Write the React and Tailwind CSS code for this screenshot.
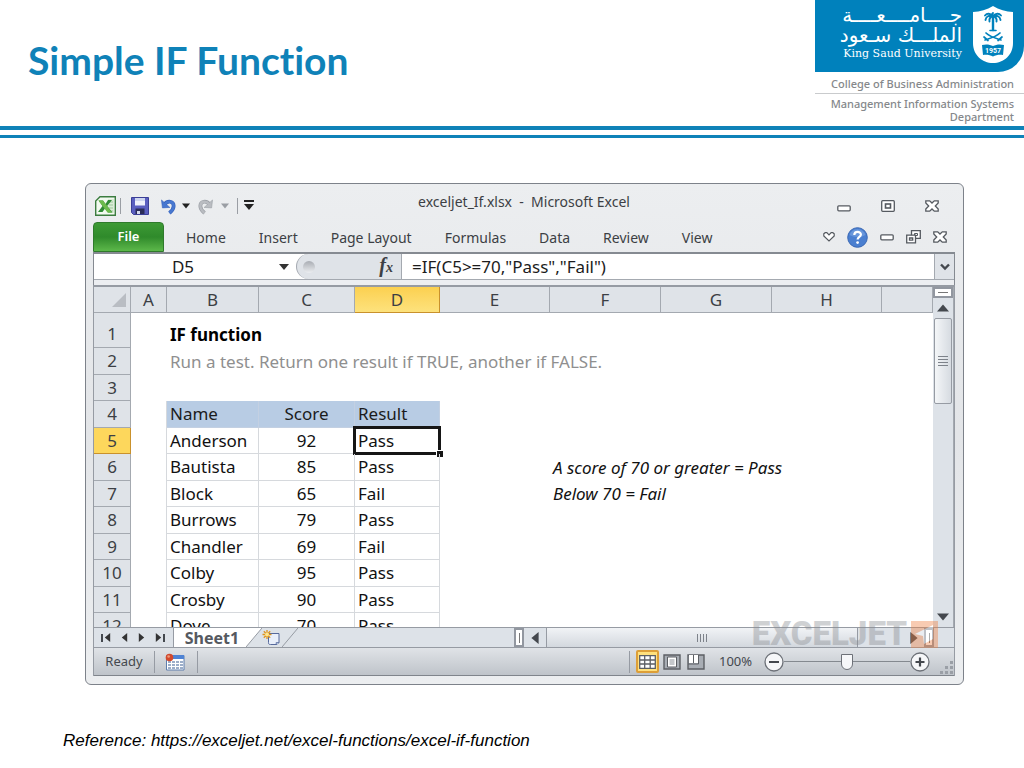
import React, { useState } from 'react';

const tabs = ['Home', 'Insert', 'Page Layout', 'Formulas', 'Data', 'Review', 'View'];

const columns = [
  { id: 'A', width: 'w-9' },
  { id: 'B', width: 'w-[92px]' },
  { id: 'C', width: 'w-24' },
  { id: 'D', width: 'w-[85px]' },
  { id: 'E', width: 'w-[110px]' },
  { id: 'F', width: 'w-[111px]' },
  { id: 'G', width: 'w-[111px]' },
  { id: 'H', width: 'w-[110px]' },
  { id: '', width: '' },
];

const rows = [
  { B: 'IF function' },
  { B: 'Run a test. Return one result if TRUE, another if FALSE.' },
  {},
  { B: 'Name', C: 'Score', D: 'Result' },
  { B: 'Anderson', C: '92', D: 'Pass' },
  { B: 'Bautista', C: '85', D: 'Pass', F: 'A score of 70 or greater = Pass' },
  { B: 'Block', C: '65', D: 'Fail', F: 'Below 70 = Fail' },
  { B: 'Burrows', C: '79', D: 'Pass' },
  { B: 'Chandler', C: '69', D: 'Fail' },
  { B: 'Colby', C: '95', D: 'Pass' },
  { B: 'Crosby', C: '90', D: 'Pass' },
  { B: 'Dove', C: '70', D: 'Pass' },
];

function getCellClass(row, col) {
  const inTable = row >= 4 && ['B', 'C', 'D'].includes(col);
  if (row === 1) return 'font-bold text-black';
  if (row === 2) return 'text-[#8f8f8f]';
  if (row === 4 && inTable) return 'bg-[#b8cce4] border-r border-b border-[#c3d0e2] text-[#1c1c1c]';
  if (inTable) return 'border-r border-b border-[#d6d9dd] text-[#111]';
  if (col === 'A' && row >= 4) return 'border-r border-[#d6d9dd]';
  return 'italic text-[#111]';
}

/* ---------- icons ---------- */

function Triangle({ dir = 'down', size = 10, className = 'text-[#333]' }) {
  const points = {
    down: '0,2 10,2 5,8',
    up: '0,8 10,8 5,2',
    left: '8,0 8,10 2,5',
    right: '2,0 2,10 8,5',
  };
  return (
    <svg width={size} height={size} viewBox="0 0 10 10" className={className} fill="currentColor">
      <polygon points={points[dir]} />
    </svg>
  );
}

function ExcelIcon() {
  return (
    <svg width="21" height="20" viewBox="0 0 21 20">
      <path d="M5 .7h15.3v18.6H.7V5z" fill="#f2faf0" stroke="#3c7d40" strokeWidth="1.4" />
      <path d="M13 3h6v14h-6z" fill="#dcecd8" />
      <path d="M14 6h4M14 9h4M14 12h4M14 15h4" stroke="#9cc79a" />
      <path d="M3.500 4.500h4.500l2.500 3.500 2.500-4h4l-4.800 6 5.300 6.500h-4.500L10 12.500 7.500 16H3l4.500-6z" fill="#2f8a35" />
      <path d="M3.500 4.500h4.500l9 12h-4.500z" fill="#6dbb4c" />
    </svg>
  );
}

function SaveIcon() {
  return (
    <svg width="18" height="18" viewBox="0 0 18 18">
      <path d="M.5.500h17v17h-15l-2-2z" fill="#5a5fc0" stroke="#3b3f96" />
      <path d="M4 1h10v7.500H4z" fill="#eef1fb" />
      <path d="M4 1h10v3H4z" fill="#cdd5f0" />
      <path d="M4.500 11.500h9V17h-9z" fill="#2a2d58" />
      <path d="M6 14h3v3H6z" fill="#d5daee" />
    </svg>
  );
}

function UndoIcon({ flipped, color = '#4878d0', edge = '#3561bb' }) {
  return (
    <svg width="15" height="17" viewBox="0 0 16 18" className={flipped ? '-scale-x-100' : ''}>
      <path d="M4 6.500C7 2.500 13.500 3 13.500 8.500c0 3.500-2 5.500-4.500 7.500" fill="none" stroke={edge} strokeWidth="4" />
      <path d="M.5 2l1 8.500 8-.5z" fill={color} stroke={edge} strokeWidth=".6" />
      <path d="M4 6.500C7 2.500 13.500 3 13.500 8.500c0 3.500-2 5.500-4.500 7.500" fill="none" stroke={color} strokeWidth="2.600" />
    </svg>
  );
}

function MinimizeIcon() {
  return (
    <svg width="14" height="7" viewBox="0 0 14 7">
      <rect x=".8" y=".8" width="12.400" height="5" rx="1" fill="#fff" stroke="#555a60" strokeWidth="1.300" />
    </svg>
  );
}

function MaximizeIcon() {
  return (
    <svg width="14" height="12" viewBox="0 0 14 12">
      <rect x=".7" y=".7" width="12.600" height="10.600" rx="1" fill="#fff" stroke="#555a60" strokeWidth="1.300" />
      <rect x="4.500" y="4" width="5" height="4" fill="#fff" stroke="#555a60" strokeWidth="1.600" />
    </svg>
  );
}

function RestoreIcon() {
  return (
    <svg width="15" height="14" viewBox="0 0 15 14">
      <path d="M5.500.700h8.800v7.600H5.500z" fill="#fff" stroke="#555a60" strokeWidth="1.300" />
      <path d="M8.500 3.500h3v2h-3z" fill="none" stroke="#555a60" />
      <path d="M.7 5.200h8.800v7.600H.7z" fill="#fff" stroke="#555a60" strokeWidth="1.300" />
      <path d="M3.500 8h3.200v2.200H3.500z" fill="none" stroke="#555a60" strokeWidth="1.300" />
    </svg>
  );
}

function CloseIcon() {
  return (
    <svg width="14" height="12" viewBox="0 0 14 12">
      <path
        d="M.8.800h3.900L7 3 9.300.800h3.900v2.200L10.300 6l2.900 3v2.200H9.300L7 9l-2.300 2.200H.8V9l2.900-3L.8 3z"
        fill="#fff"
        stroke="#555a60"
        strokeWidth="1.300"
      />
    </svg>
  );
}

function RibbonToggleIcon() {
  return (
    <svg width="12" height="10" viewBox="0 0 12 10">
      <path d="M.8 1.800L2.200.700h1.600L6 3 8.200.700h1.600l1.400 1.100V4L6 9 .8 4z" fill="#fff" stroke="#555a60" strokeWidth="1.200" />
    </svg>
  );
}

function HelpIcon() {
  return (
    <svg width="21" height="21" viewBox="0 0 21 21">
      <circle cx="10.500" cy="10.500" r="9.800" fill="#4a7fd0" stroke="#3a68b4" />
      <path d="M2.500 8a8.500 8.500 0 0116 0c-4 2.500-12 2.500-16 0z" fill="#7ea6e2" opacity=".6" />
      <path d="M7.300 8c0-4 6.600-4 6.600-.4 0 2.400-3.300 2.300-3.300 5" fill="none" stroke="#fff" strokeWidth="2.200" />
      <circle cx="10.600" cy="15.600" r="1.400" fill="#fff" />
    </svg>
  );
}

function MacroIcon() {
  return (
    <svg width="20" height="18" viewBox="0 0 20 18">
      <path d="M1.500 2.500h17.500v14.500H1.500z" fill="#fff" stroke="#5f7fae" />
      <path d="M2 2h17v4H2z" fill="#4f83d4" />
      <path d="M3 9h15M3 12h15M3 15h15" stroke="#7c94b8" strokeWidth="1.400" />
      <path d="M6.500 7v9M10.500 7v9M14.500 7v9" stroke="#fff" />
      <circle cx="4.500" cy="4.500" r="3.800" fill="#d3492c" />
      <circle cx="3.600" cy="3.500" r="1.300" fill="#ee9a7c" />
    </svg>
  );
}

function NewSheetIcon() {
  return (
    <svg width="20" height="16" viewBox="0 0 20 16">
      <path d="M6.500 3.500h10.500v9l-2 2H8.500c-2 0-2-1-2-2z" fill="#e9effa" stroke="#56699c" />
      <path d="M17 12.500l-3 .2.500 2.300" fill="#b8c6e4" stroke="#56699c" strokeWidth=".8" />
      <path d="M5 0v9M.5 4.500h9M1.800 1.300l6.400 6.400M8.200 1.300L1.800 7.700" stroke="#dd9420" strokeWidth="1.300" />
      <circle cx="5" cy="4.500" r="2" fill="#ffe58a" />
    </svg>
  );
}

function Shield() {
  return (
    <svg width="42" height="59" viewBox="0 0 42 59">
      <path d="M21 0c6 4 13 5.500 20 6v31c0 12-9 20-20 20S1 49 1 37V6c7-.5 14-2 20-6z" fill="#fff" />
      <g fill="none" stroke="#0081bc" strokeLinecap="round">
        <path d="M21 11v13" strokeWidth="2.400" />
        <path d="M21 10c-3-3-6-3-8-.5M21 10c3-3 6-3 8-.5M21 10c-5-1-7 1-7.500 4M21 10c5-1 7 1 7.500 4M21 10c-3 1-4 3-3.500 5.500M21 10c3 1 4 3 3.500 5.500M21 10c-1-1-1-2 0-3" strokeWidth="1.900" />
        <path d="M18 24.500h6" strokeWidth="1.600" />
        <path d="M13 34c3-1 11-3 15-7M29 34c-3-1-11-3-15-7M12 31l4 3.500M30 31l-4 3.500" strokeWidth="1.700" />
      </g>
      <path d="M10 39c4-1 8-.5 11 1 3-1.500 7-2 11-1l-1 10c-4-.5-7 0-10 1.500-3-1.500-6-2-10-1.500z" fill="#0081bc" />
      <text x="21" y="47" textAnchor="middle" fontSize="7" fontWeight="bold" fontFamily="Roboto, sans-serif" fill="#fff">1957</text>
    </svg>
  );
}

/* ---------- page header ---------- */

function SlideHeader() {
  return (
    <header>
      <div className="flex justify-between h-[126px]">
        <h1 className="pl-7 pt-9 text-[39px] leading-[48px] font-bold text-[#0f82b8] font-['Lato',sans-serif] [font-variant-ligatures:none]">
          Simple IF Function
        </h1>
        <div className="w-[209px] font-['Noto_Sans',sans-serif] text-[#85888b]">
          <div className="flex justify-end gap-2.5 h-[72px] bg-[#0081bc] rounded-br-[26px] pr-2.5 text-white">
            <div className="pt-1.5 text-right">
              <p dir="rtl" className="h-[18px] text-[20px] leading-[18px] font-['DejaVu_Sans',sans-serif] whitespace-nowrap">جــــامــــعــــة</p>
              <p dir="rtl" className="h-[20px] text-[20px] leading-[22px] font-['DejaVu_Sans',sans-serif] whitespace-nowrap">الملـــك سـعود</p>
              <p className="text-[11px] leading-5 font-['DejaVu_Serif',serif] whitespace-nowrap">King Saud University</p>
            </div>
            <div className="pt-1.5"><Shield /></div>
          </div>
          <p className="pt-1 h-[22px] pr-2.5 text-right text-[11px] leading-4 font-medium whitespace-nowrap border-b border-[#c9cbcd]">
            College of Business Administration
          </p>
          <p className="pt-[3px] pr-2.5 text-right text-[11px] leading-[13px] font-medium">
            Management Information Systems Department
          </p>
        </div>
      </div>
      <div className="h-3 border-t-4 border-b-3 border-[#0f82b8]" />
    </header>
  );
}

/* ---------- workbook window ---------- */

function TitleBar() {
  return (
    <div className="grid grid-cols-[1fr_auto_1fr] h-[38px] text-[#3c3f44]">
      <div className="flex items-center pt-1.5 pl-0.5">
        <ExcelIcon />
        <span className="ml-1 w-px h-4 bg-[#9a9ea4]" />
        <button type="button" aria-label="Save" className="ml-2.5"><SaveIcon /></button>
        <button type="button" aria-label="Undo" className="ml-3"><UndoIcon /></button>
        <Triangle size={8} className="ml-1.5 text-[#222]" />
        <button type="button" aria-label="Redo" className="ml-2"><UndoIcon flipped color="#b9bcc1" edge="#9a9ea4" /></button>
        <Triangle size={8} className="ml-2 text-[#9a9ea4]" />
        <span className="ml-2 w-px h-4 bg-[#9a9ea4]" />
        <button type="button" aria-label="Customize toolbar" className="ml-1.5 flex flex-col items-center">
          <span className="w-2.5 h-0.5 bg-[#222]" />
          <Triangle className="text-[#222]" />
        </button>
      </div>
      <p className="pt-2 text-[14px] leading-5 whitespace-pre">exceljet_If.xlsx  -  Microsoft Excel</p>
      <div className="flex items-center justify-end gap-[30px] pt-1.5 pr-4">
        <button type="button" aria-label="Minimize" className="pt-1"><MinimizeIcon /></button>
        <button type="button" aria-label="Maximize"><MaximizeIcon /></button>
        <button type="button" aria-label="Close"><CloseIcon /></button>
      </div>
    </div>
  );
}

function RibbonTabs() {
  return (
    <nav className="flex items-center h-[30px] text-[14px] text-[#3c3f44]">
      <button type="button" className="w-[71px] h-full rounded-t border border-[#2f7a2c] bg-linear-to-b from-[#3d9a35] via-[#2f8a2b] to-[#5cb84a] text-[13px] font-semibold text-white">
        File
      </button>
      <div className="flex gap-[33px] ml-[22px]">
        {tabs.map((tab) => (
          <button key={tab} type="button" className="whitespace-nowrap">{tab}</button>
        ))}
      </div>
      <div className="flex items-center gap-3 ml-auto pr-2">
        <button type="button" aria-label="Collapse ribbon"><RibbonToggleIcon /></button>
        <button type="button" aria-label="Help"><HelpIcon /></button>
        <button type="button" aria-label="Minimize workbook"><MinimizeIcon /></button>
        <button type="button" aria-label="Restore workbook"><RestoreIcon /></button>
        <button type="button" aria-label="Close workbook"><CloseIcon /></button>
      </div>
    </nav>
  );
}

function FormulaBar() {
  return (
    <div className="flex h-[33px] pb-[5px] border-t-2 border-x border-[#858a91] bg-[#eceef1] text-[17px] text-[#1c1c1c]">
      <div className="flex flex-1 bg-white border-b border-[#a4a9b0]">
        <input aria-label="Name box" defaultValue="D5" className="w-[178px] min-w-0 text-center" />
        <button type="button" aria-label="Open name list" className="w-6 flex items-center justify-center">
          <Triangle />
        </button>
        <div className="flex items-center justify-between w-[106px] pl-1.5 pr-2 rounded-l-full border-l border-r border-[#a4a9b0] bg-[#dfe3e8]">
          <span className="w-3 h-3 rounded-full bg-linear-to-b from-[#a9adb3] to-[#eceef1]" />
          <button type="button" aria-label="Insert function" className="font-['Liberation_Serif',serif] italic font-bold text-[20px] leading-5 text-[#3c3f44]">
            f<span className="text-[14px]">x</span>
          </button>
        </div>
        <input aria-label="Formula" defaultValue={'=IF(C5>=70,"Pass","Fail")'} className="flex-1 min-w-0 pl-2.5" />
        <button type="button" aria-label="Expand formula bar" className="flex items-center justify-center w-5 border-l border-[#a4a9b0] bg-[#dfe3e8]">
          <svg width="10" height="8" viewBox="0 0 10 8"><path d="M1 1.500l4 4 4-4" fill="none" stroke="#44484e" strokeWidth="2.400" /></svg>
        </button>
      </div>
    </div>
  );
}

function Sheet({ selected, onSelect }) {
  return (
    <table className="w-full table-fixed border-separate border-spacing-0 text-[17px] leading-5">
      <thead>
        <tr className="h-[26px] text-[#3c3f44]">
          <th className="w-[37px] bg-[#dfe3e8] border-r border-b border-[#a4a9b0] p-0">
            <svg width="14" height="14" viewBox="0 0 14 14" className="ml-auto mr-1"><path d="M14 0v14H0z" fill="#b9bdc3" /></svg>
          </th>
          {columns.map((col) => (
            <th
              key={col.id}
              scope="col"
              className={`p-0 font-normal border-r border-b ${col.width} ${
                selected.col === col.id
                  ? 'bg-linear-to-b from-[#fbd04f] to-[#fde27c] border-[#c9912c]'
                  : 'bg-[#dfe3e8] border-[#a4a9b0]'
              }`}
            >
              {col.id}
            </th>
          ))}
        </tr>
      </thead>
      <tbody>
        {rows.map((row, i) => {
          const n = i + 1;
          return (
            <tr key={n} className={n === 1 ? 'h-[35px]' : n % 2 ? 'h-[26px]' : 'h-[27px]'}>
              <th
                scope="row"
                className={`p-0 font-normal text-[#3c3f44] border-r border-b ${n === 1 ? 'pt-2' : ''} ${
                  selected.row === n ? 'bg-[#fdd75c] border-[#c9912c]' : 'bg-[#dfe3e8] border-[#a4a9b0]'
                }`}
              >
                {n}
              </th>
              {columns.map((col) => (
                <td
                  key={col.id}
                  onClick={() => onSelect({ row: n, col: col.id })}
                  className={`relative py-0 px-[3px] whitespace-nowrap ${n === 1 ? 'pt-2' : ''} ${col.id === 'C' ? 'text-center' : ''} ${getCellClass(n, col.id)}`}
                >
                  {row[col.id]}
                  {selected.row === n && selected.col === col.id && (
                    <span className="absolute -inset-0.5 border-3 border-[#161616]">
                      <span className="absolute -right-[5px] -bottom-[5px] w-[7px] h-[7px] bg-[#161616] border-t border-l border-white" />
                    </span>
                  )}
                </td>
              ))}
            </tr>
          );
        })}
      </tbody>
    </table>
  );
}

function VerticalScroll() {
  return (
    <div className="flex flex-col items-center w-[21px] shrink-0 bg-[#dde2e8] border-r border-[#a4a9b0]">
      <span className="flex items-center justify-center w-5 h-[11px] border-2 border-[#9297a0] bg-white">
        <span className="w-2.5 h-px bg-[#777]" />
      </span>
      <button type="button" aria-label="Scroll up" className="flex items-center h-5"><Triangle dir="up" size={12} className="text-[#44484e]" /></button>
      <div className="flex flex-col items-center justify-center gap-0.5 w-[18px] h-[86px] rounded-xs border border-[#969ba3] bg-linear-to-r from-[#f4f6f8] to-[#d6dbe1]">
        <span className="w-2.5 h-px bg-[#7d828a]" />
        <span className="w-2.5 h-px bg-[#7d828a]" />
        <span className="w-2.5 h-px bg-[#7d828a]" />
        <span className="w-2.5 h-px bg-[#7d828a]" />
      </div>
      <button type="button" aria-label="Scroll down" className="flex items-center h-5 mt-auto"><Triangle size={12} className="text-[#44484e]" /></button>
    </div>
  );
}

function SheetTabs() {
  return (
    <div className="flex h-[21px] border-y border-[#969ba3] bg-[#dde2e8]">
      <div className="flex w-[420px] shrink-0">
        <div className="flex items-center gap-2 w-[79px] pl-[7px] text-[#44484e]">
          <button type="button" aria-label="First sheet" className="flex items-center"><span className="w-0.5 h-2 bg-[#44484e]" /><Triangle dir="left" size={9} /></button>
          <button type="button" aria-label="Previous sheet"><Triangle dir="left" size={9} /></button>
          <button type="button" aria-label="Next sheet"><Triangle dir="right" size={9} /></button>
          <button type="button" aria-label="Last sheet" className="flex items-center"><Triangle dir="right" size={9} /><span className="w-0.5 h-2 bg-[#44484e]" /></button>
        </div>
        <button type="button" className="w-[73px] pl-1 bg-white border-l border-[#969ba3] text-[16px] leading-[18px] font-bold text-[#55595f]">Sheet1</button>
        <svg width="16" height="19" viewBox="0 0 16 19"><path d="M0 0h16L0 19z" fill="#fff" /><path d="M16 0L0 19" stroke="#969ba3" /></svg>
        <button type="button" aria-label="Insert worksheet" className="w-5 flex items-center justify-center"><NewSheetIcon /></button>
        <svg width="16" height="19" viewBox="0 0 16 19"><path d="M16 0L0 19" stroke="#969ba3" /></svg>
      </div>
      <span className="flex items-center justify-center w-2.5 border-2 border-[#9297a0] bg-white"><span className="w-px h-2.5 bg-[#777]" /></span>
      <button type="button" aria-label="Scroll left" className="flex items-center justify-center w-[22px]"><Triangle dir="left" size={12} className="text-[#44484e]" /></button>
      <div className="flex flex-1 items-center justify-center gap-0.5 border-x border-[#969ba3] bg-linear-to-b from-[#f1f3f6] to-[#d3d8de]">
        <span className="w-px h-2 bg-[#7d828a]" />
        <span className="w-px h-2 bg-[#7d828a]" />
        <span className="w-px h-2 bg-[#7d828a]" />
        <span className="w-px h-2 bg-[#7d828a]" />
      </div>
      <button type="button" aria-label="Scroll right" className="flex items-center justify-end w-[66px] pr-1"><Triangle dir="right" size={12} className="text-[#44484e]" /></button>
      <span className="flex items-center justify-center w-2.5 mr-5 border-2 border-[#9297a0] bg-white"><span className="w-px h-2.5 bg-[#777]" /></span>
    </div>
  );
}

function StatusBar({ zoom, setZoom }) {
  return (
    <div className="flex items-center h-7 border-b border-[#80858c] bg-linear-to-b from-[#e0e3e7] to-[#bfc4ca] text-[13px] text-[#44484e]">
      <span className="w-[60px] text-center">Ready</span>
      <span className="w-px h-[22px] bg-[#969ba3]" />
      <button type="button" aria-label="Record macro" className="ml-2.5 mr-3"><MacroIcon /></button>
      <span className="w-px h-[22px] bg-[#969ba3]" />

      <span className="ml-auto w-px h-[22px] bg-[#969ba3]" />
      <button type="button" aria-label="Normal view" className="flex items-center justify-center w-[23px] h-[23px] ml-1.5 rounded-xs border-2 border-[#dd9f38] bg-[#ffe07c]">
        <svg width="17" height="14" viewBox="0 0 17 14"><path d="M.7.700h15.600v12.600H.7zM.7 5h15.600M.7 9h15.600M5.700 1v12M11.200 1v12" fill="#fff" stroke="#5c5f64" strokeWidth="1.300" /></svg>
      </button>
      <button type="button" aria-label="Page layout view" className="ml-1">
        <svg width="18" height="16" viewBox="0 0 18 16"><path d="M1 1h16v14H1z" fill="#a8adb4" stroke="#5c5f64" strokeWidth="1.400" /><path d="M4.500 3h9v10h-9z" fill="#fff" stroke="#5c5f64" /><path d="M6.500 6h5M6.500 8h5M6.500 10h5" stroke="#8b9097" /></svg>
      </button>
      <button type="button" aria-label="Page break preview" className="ml-1.5">
        <svg width="18" height="16" viewBox="0 0 18 16"><path d="M1 1h16v14H1z" fill="#a8adb4" stroke="#5c5f64" strokeWidth="1.400" /><path d="M2 1h4v8H2zM7 1h4v8H7z" fill="#fff" /><path d="M6.500 1v8M11.500 1v9H1" fill="none" stroke="#5c5f64" /></svg>
      </button>
      <span className="ml-3.5 w-[39px]">{zoom}%</span>
      <button type="button" aria-label="Zoom out" onClick={() => setZoom(Math.max(10, zoom - 10))} className="ml-1.5">
        <svg width="20" height="20" viewBox="0 0 20 20"><circle cx="10" cy="10" r="9" fill="#f6f7f9" stroke="#6d7178" strokeWidth="1.300" /><path d="M5 10h10" stroke="#44484e" strokeWidth="2" /></svg>
      </button>
      <input
        type="range"
        aria-label="Zoom"
        min="10"
        max="190"
        value={zoom}
        onChange={(e) => setZoom(Number(e.target.value))}
        className="w-[126px] h-4 appearance-none bg-[linear-gradient(#84898f,#84898f)] bg-[length:100%_1px] bg-center bg-no-repeat [&::-webkit-slider-thumb]:appearance-none [&::-webkit-slider-thumb]:w-3 [&::-webkit-slider-thumb]:h-4 [&::-webkit-slider-thumb]:rounded-t-xs [&::-webkit-slider-thumb]:rounded-b-full [&::-webkit-slider-thumb]:border [&::-webkit-slider-thumb]:border-[#6d7178] [&::-webkit-slider-thumb]:bg-[#f6f7f9]"
      />
      <button type="button" aria-label="Zoom in" onClick={() => setZoom(Math.min(190, zoom + 10))}>
        <svg width="20" height="20" viewBox="0 0 20 20"><circle cx="10" cy="10" r="9" fill="#f6f7f9" stroke="#6d7178" strokeWidth="1.300" /><path d="M5.500 10h9M10 5.500v9" stroke="#44484e" strokeWidth="2.200" /></svg>
      </button>
      <svg width="14" height="14" viewBox="0 0 14 14" className="ml-2.5 mt-3" fill="#9a9fa6">
        <path d="M10 0h3v3h-3zM10 5h3v3h-3zM5 5h3v3H5zM10 10h3v3h-3zM5 10h3v3H5zM0 10h3v3H0z" />
      </svg>
    </div>
  );
}

function Watermark() {
  return (
    <div className="absolute right-4 bottom-6 flex items-center gap-1 opacity-40 pointer-events-none">
      <span className="text-[33px] leading-9 font-black text-[#8a8d92] font-['Roboto',sans-serif]">EXCELJET</span>
      <svg width="27" height="27" viewBox="0 0 27 27">
        <path d="M0 0h27v27H0z" fill="#f08040" />
        <path d="M22 4L4 13l8 2 1 8 9-5z" fill="#fff" />
      </svg>
    </div>
  );
}

export default function App() {
  const [selected, setSelected] = useState({ row: 5, col: 'D' });
  const [zoom, setZoom] = useState(100);

  return (
    <div className="min-h-screen bg-white">
      <SlideHeader />

      <main className="pl-[85px] pr-[60px] pt-[45px]">
        <div className="rounded-md border border-[#7d828a] bg-linear-to-b from-[#eceef0] via-[#e3e5e8] to-[#eceef0] pl-[7px] pr-2 pb-2 font-['Noto_Sans',sans-serif]">
          <TitleBar />
          <RibbonTabs />
          <FormulaBar />
          <div className="relative border-x border-[#969ba3]">
            <div className="flex h-[342px] overflow-hidden bg-white border-t-2 border-[#969ba3]">
              <div className="flex-1 min-w-0"><Sheet selected={selected} onSelect={setSelected} /></div>
              <VerticalScroll />
            </div>
            <SheetTabs />
            <StatusBar zoom={zoom} setZoom={setZoom} />
            <Watermark />
          </div>
        </div>
      </main>

      <footer className="pl-[63px] pt-11">
        <p className="text-[17px] leading-6 italic text-black font-['Liberation_Sans',Arial,sans-serif]">
          Reference: https://exceljet.net/excel-functions/excel-if-function
        </p>
      </footer>
    </div>
  );
}
